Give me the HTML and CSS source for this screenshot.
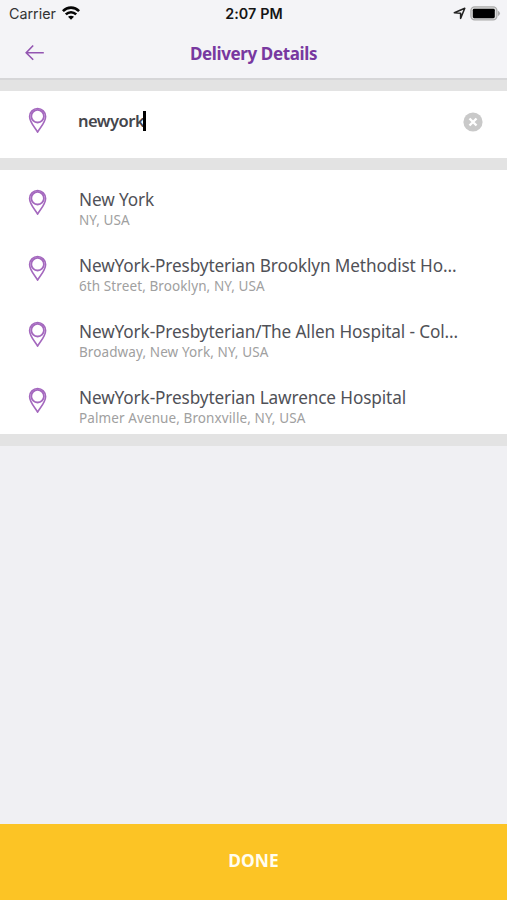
FILE: index.html
```html
<!DOCTYPE html>
<html lang="en">
<head>
<meta charset="utf-8">
<title>Delivery Details</title>
<link rel="stylesheet" href="styles.css">
</head>
<body>
<svg width="0" height="0" class="defs" aria-hidden="true">
  <symbol id="pin" viewBox="0 0 20 28"><g fill="none" stroke="#a468be" stroke-width="1.6" stroke-linejoin="round"><path d="M9.6 25.2C7.6 21.2 1.6 15.6 1.6 9.5a8 8 0 0 1 16 0C17.6 15.6 11.6 21.2 9.6 25.2Z"/><circle cx="9.6" cy="9.2" r="6.3" stroke-width="1.8"/></g></symbol>
</svg>
<header class="top">
  <div class="status">
    <div class="carrier"><span>Carrier</span>
      <svg class="wifi" width="18" height="14" viewBox="0 0 18 14"><g fill="none" stroke="#050505" stroke-width="2.6"><path d="M.9 5.1C5.5.4 12.5.4 17.1 5.1"/><path d="M3.8 8.4c3-2.9 7.4-2.9 10.4 0"/></g><path d="M9 13.7 6 10.8c1.7-1.5 4.3-1.5 6 0Z" fill="#050505"/></svg>
    </div>
    <div class="clock">2:07 PM</div>
    <div class="indicators">
      <svg width="13" height="13" viewBox="0 0 13 13"><path d="M11.8 1.2 7.6 11.4V6.2L1.3 5.7Z" fill="none" stroke="#222" stroke-width="1.5" stroke-linejoin="round"/></svg>
      <svg width="31" height="15" viewBox="0 0 31 15"><rect x=".9" y=".9" width="26" height="13" rx="3.8" fill="#ddd" stroke="#aaa" stroke-width="1.3"/><rect x="2.8" y="2.8" width="22" height="9.4" rx="1.4" fill="#000"/><path d="M28 4.8q4 2.7 0 5.4Z" fill="#aaa"/></svg>
    </div>
  </div>
  <div class="nav">
    <svg class="back" width="20" height="18" viewBox="0 0 20 18"><path d="M18.8 8.8H1.5M8.2 1.5 1.2 8.8l7 7" fill="none" stroke="#9355b1" stroke-width="1.6"/></svg>
    <h1 class="title">Delivery Details</h1>
    <span></span>
  </div>
</header>
<div class="band band-top"></div>
<div class="search">
  <svg class="pin"><use href="#pin"/></svg>
  <div class="query"><span>newyork</span><i class="caret"></i></div>
  <svg class="clear" width="20" height="20" viewBox="0 0 20 20"><circle cx="10" cy="10" r="9.6" fill="#c9c9c9"/><path d="m6.5 6.5 7 7m0-7-7 7" stroke="#fff" stroke-width="2.4"/></svg>
</div>
<div class="band"></div>
<ul class="results">
  <li class="row"><svg class="pin"><use href="#pin"/></svg><div class="place"><div class="name">New York</div><div class="address">NY, USA</div></div></li>
  <li class="row"><svg class="pin"><use href="#pin"/></svg><div class="place"><div class="name">NewYork-Presbyterian Brooklyn Methodist Ho...</div><div class="address">6th Street, Brooklyn, NY, USA</div></div></li>
  <li class="row"><svg class="pin"><use href="#pin"/></svg><div class="place"><div class="name">NewYork-Presbyterian/The Allen Hospital - Col...</div><div class="address">Broadway, New York, NY, USA</div></div></li>
  <li class="row"><svg class="pin"><use href="#pin"/></svg><div class="place"><div class="name">NewYork-Presbyterian Lawrence Hospital</div><div class="address">Palmer Avenue, Bronxville, NY, USA</div></div></li>
</ul>
<div class="band"></div>
<main class="space"></main>
<button class="done">DONE</button>
</body>
</html>
```
FILE: styles.css
```css
* { box-sizing: border-box; }
body { margin: 0; height: 900px; display: flex; flex-direction: column; overflow: hidden; background: #f0f0f3; font-family: "Noto Sans", "Open Sans", sans-serif; font-stretch: 87.5%; }
.defs { position: absolute; }
.top { height: 80px; flex: none; background: #f4f4f7; border-bottom: 2px solid #d6d6d8; }
.status { height: 27px; display: grid; grid-template-columns: 1fr auto 1fr; align-items: center; padding: 0 6px 0 9px; font-family: Inter, sans-serif; font-stretch: normal; color: #151515; }
.carrier { display: flex; align-items: center; gap: 6px; font-size: 14.3px; color: #333; }
.wifi { margin-top: -1px; }
.clock { font-size: 14.3px; font-weight: 600; margin-left: -2px; letter-spacing: 0.1px; }
.indicators { display: flex; justify-content: flex-end; align-items: center; gap: 4px; }
.nav { display: grid; grid-template-columns: 44px 1fr 44px; height: 52px; align-items: center; }
.back { margin-left: 25px; }
.title { margin: 0; padding-top: 2px; text-align: center; font-size: 17px; font-weight: 700; letter-spacing: -0.37px; color: #7838a0; line-height: 24px; }
.band { height: 12px; flex: none; background: #e3e3e3; }
.band-top { height: 11px; }
.search { height: 67px; flex: none; background: #fff; display: flex; align-items: flex-start; padding: 16px 24px 0 28px; }
.pin { width: 20px; height: 28px; flex: none; }
.query { display: flex; flex: 1; margin-left: 30px; height: 28px; align-items: center; font-size: 16.5px; font-weight: 600; letter-spacing: -0.5px; color: #45464c; line-height: 24px; }
.caret { width: 3px; height: 20px; margin-left: -1px; background: #000; }
.clear { margin-top: 5px; }
.results { list-style: none; margin: 0; padding: 0; height: 264px; flex: none; background: #fff; }
.row { height: 66px; display: flex; padding: 19px 28px 0; }
.place { margin-left: 31px; white-space: nowrap; }
.name { font-size: 17.2px; letter-spacing: -0.12px; line-height: 22px; color: #505157; }
.address { font-size: 13.5px; letter-spacing: 0.1px; line-height: 18px; color: #a0a0a0; }
.space { flex: 1; }
.done { height: 76px; flex: none; border: 0; background: #fcc425; color: #fffdf0; font: 700 17.4px/24px "Noto Sans", sans-serif; font-stretch: 87.5%; padding: 0 0 5px; }
```
